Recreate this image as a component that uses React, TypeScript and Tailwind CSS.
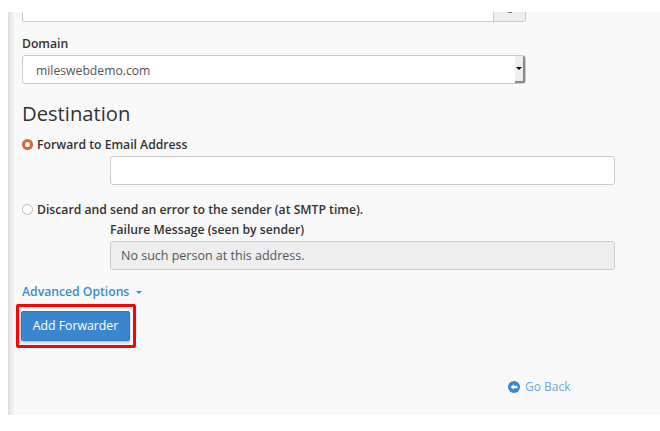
export default function App() {
  return (
    <div className="w-[660px] h-[431px] bg-white pt-3 pb-4 font-['Open_Sans',sans-serif] text-[#333] overflow-hidden">
      <div className="h-full ml-2 bg-[#f9f9f9] border-l-[1px] border-[#ddd] bg-gradient-to-r from-[#e4e4e4] from-0% to-[#f9f9f9] to-[1%] pl-[13px] flex flex-col">
        <div className="w-[504px] h-[10px] flex bg-white border border-t-0 border-[#ccc] rounded-b-[3px] overflow-hidden">
          <div className="flex-1" />
          <div className="w-[32px] bg-[#eee] border-l border-[#ccc] flex justify-center">
            <div className="w-[4px] h-[1px] bg-[#777]" />
          </div>
        </div>

        <label className="mt-[13px] h-[18px] leading-[18px] text-[12.2px] font-semibold">Domain</label>
        <div className="mt-[2px] w-[504px] h-[29px] flex bg-white border border-[#ccc] rounded-[3px] overflow-hidden">
          <div className="flex-1 pl-[13px] leading-[29px] text-[12.2px] text-[#555]">mileswebdemo.com</div>
          <div className="w-[10px] bg-[#eee] border-r-[2px] border-b-[2px] border-[#888] flex items-center justify-center">
            <div className="border-x-[3px] border-x-transparent border-t-[3px] border-t-black" />
          </div>
        </div>

        <h2 className="mt-[14px] h-[30px] leading-[30px] text-[20.2px] font-normal">Destination</h2>

        <div className="mt-[9px] h-[16px] flex items-center">
          <div className="w-[11px] h-[11px] -mt-[2px] rounded-full border-[3px] border-[#cf6a3c] bg-white" />
          <span className="ml-1 text-[12.2px] font-semibold leading-[16px]">Forward to Email Address</span>
        </div>
        <div className="mt-[3px] pl-[88px]">
          <input className="block w-[505px] h-[29px] bg-white border border-[#ccc] rounded-[3px]" />
        </div>

        <div className="mt-[17px] h-[16px] flex items-center">
          <div className="w-[11px] h-[11px] -mt-[2px] rounded-full border border-[#bbb] bg-white" />
          <span className="ml-1 text-[12.2px] font-semibold leading-[16px]">Discard and send an error to the sender (at SMTP time).</span>
        </div>
        <div className="mt-[4px] pl-[88px]">
          <div className="h-[16px] leading-[16px] text-[12.2px] font-semibold">Failure Message (seen by sender)</div>
          <input
            disabled
            value="No such person at this address."
            className="block mt-[3px] w-[505px] h-[29px] px-[10px] bg-[#eee] border border-[#ccc] rounded-[3px] text-[12.5px] text-[#555]"
          />
        </div>

        <div className="mt-[14px] h-[16px] flex items-center text-[12.2px] font-semibold text-[#3d8bd0]">
          Advanced Options
          <span className="ml-[7px] border-x-[3.5px] border-x-transparent border-t-[3.5px] border-t-[#3d8bd0]" />
        </div>

        <div className="mt-[4px] -ml-[6px] w-[120px] h-[44px] border-[3px] border-[#f00] rounded-[2px] flex items-center pl-[2px]">
          <button className="w-[109px] h-[30px] bg-[#3a87cf] rounded-[2px] border border-[#2f78bb] shadow-[0_2px_3px_rgba(0,0,0,0.2)] text-[12.3px] text-white">
            Add Forwarder
          </button>
        </div>

        <div className="mt-[31px] ml-[486px] h-[16px] flex items-center text-[12px] text-[#6aa6dd]">
          <svg width="12" height="12" viewBox="0 0 12 12" className="mr-[5px]">
            <circle cx="6" cy="6" r="6" fill="#3a87cf" />
            <path d="M2.5 6 L5.8 3.2 V4.8 H9.5 V7.2 H5.8 V8.8 Z" fill="#fff" />
          </svg>
          Go Back
        </div>
      </div>
    </div>
  );
}
